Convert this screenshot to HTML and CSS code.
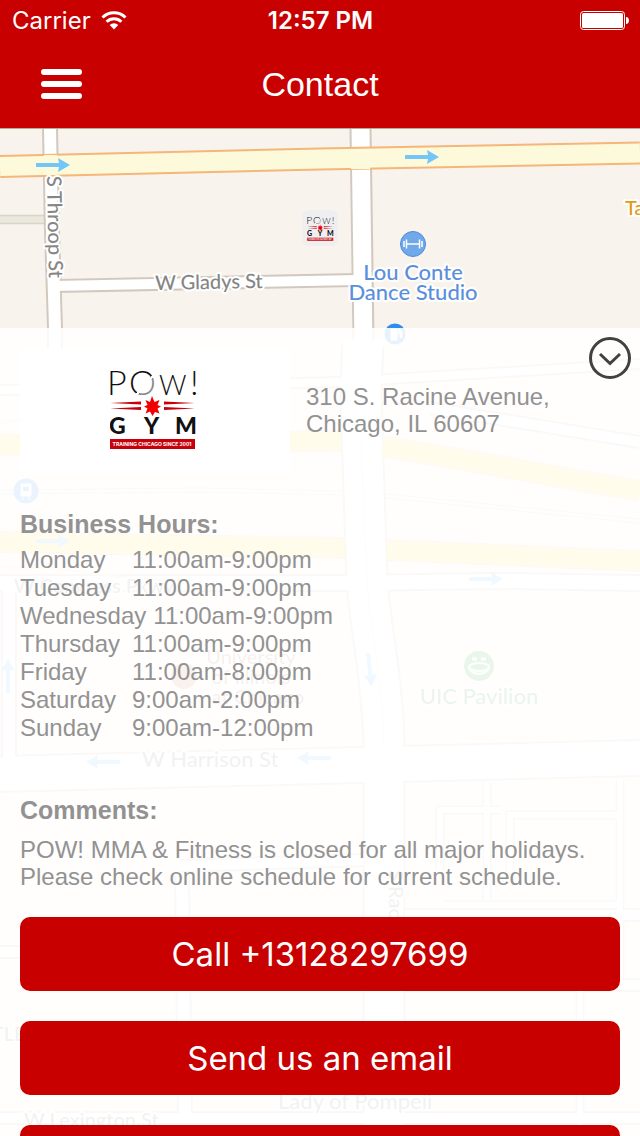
FILE: index.html
```html
<!DOCTYPE html>
<html lang="en">
<head>
    <meta charset="UTF-8">
    <meta name="viewport" content="width=device-width, initial-scale=1.0">
    <title>Contact</title>
    <link rel="stylesheet" href="styles.css">
</head>
<body>

    <header>
        <div class="status-bar">
            <div class="carrier">
                <span>Carrier</span>
                <svg class="wifi" viewBox="0 0 26 19" aria-hidden="true">
                    <path d="M1.5 6.5a16.5 16.5 0 0 1 23 0" fill="none" stroke="#fff" stroke-width="3"/>
                    <path d="M5.6 10.8a10.5 10.5 0 0 1 14.8 0" fill="none" stroke="#fff" stroke-width="3"/>
                    <path d="M13 18.5l-4.3-4.6a6.2 6.2 0 0 1 8.6 0z" fill="#fff"/>
                </svg>
            </div>
            <span class="time">12:57 PM</span>
            <svg class="battery" viewBox="0 0 49 19" aria-hidden="true">
                <rect x="0.5" y="0.5" width="44" height="18" rx="3" fill="none" stroke="#fff"/>
                <rect x="2" y="2" width="41" height="15" rx="1.5" fill="#fff"/>
                <path d="M46 6c4 0 4 7 0 7z" fill="#fff"/>
            </svg>
        </div>
        <nav>
            <button class="menu-button" type="button" aria-label="Menu">
                <span></span>
                <span></span>
                <span></span>
            </button>
            <h1>Contact</h1>
        </nav>
    </header>

    <main>
        <svg class="map" viewBox="0 129 640 1007" preserveAspectRatio="xMidYMin slice">
            <defs>
                <linearGradient id="ring" gradientUnits="userSpaceOnUse" x1="134" y1="374" x2="154" y2="392">
                    <stop offset="0.53" stop-color="#111"/>
                    <stop offset="0.54" stop-color="#fff"/>
                    <stop offset="0.61" stop-color="#fff"/>
                    <stop offset="0.62" stop-color="#888"/>
                </linearGradient>
                <symbol id="logo" viewBox="110 368 90 85">
                    <text class="logo-pow" y="395"><tspan x="107">P</tspan><tspan x="129" fill="url(#ring)">O</tspan><tspan class="narrow" x="159">W</tspan><tspan x="190">!</tspan></text>
                    <path d="M110 403l31-1.5v3zM110 408.500l31-1.5v3zM195 403l-31-1.5v3zM195 408.500l-31-1.5v3z" fill="#c8000a"/>
                    <path d="M152 396l2.5 6 5-2-2 5 3.500 1.500-3.500 2 2 5-4.500-1.500-2.500 4-2.500-4.500-4.500 2 2-5-3.500-2 3.500-1.500-2-5 4.500 2z" fill="#f00000"/>
                    <text class="logo-gym" y="434"><tspan x="109">G</tspan><tspan x="144">Y</tspan><tspan x="175">M</tspan></text>
                    <rect x="110" y="439" width="85" height="10" fill="#c8000a"/>
                    <text class="logo-tag" x="152" y="446">TRAINING CHICAGO SINCE 2001</text>
                </symbol>
                <symbol id="arrow" viewBox="0 0 34 14">
                    <path d="M0 5h23L22 0l12 7-12 7 1-5H0z" fill="#72c7f8"/>
                </symbol>
            </defs>

            <rect y="129" width="640" height="1007" fill="#f8f4ed"/>
            <path d="M0 215h46v9H0z" fill="#eae8dd"/>
            <path d="M0 215.5h46M0 223.5h46" stroke="#d8d4c6" stroke-width="1.5"/>

            <!-- streets: casing first, then surface -->
            <g fill="none" stroke="#d2c8be">
                <g stroke-width="16">
                    <path d="M50 128L52 230L55 328V440"/>
                    <path d="M56 286L356 280" stroke-width="14"/>
                    <path d="M9 590V760"/>
                    <path d="M182 872L185 1120"/>
                </g>
                <path d="M360.5 128L363.5 340" stroke-width="22"/>
                <path d="M363 346C362 365 361 380 361 400L367 580C369 620 383 680 384 745V1136" stroke-width="43"/>
                <path d="M0 583H340L500 581L640 583" stroke-width="18"/>
                <path d="M0 774L360 765L640 758" stroke-width="38"/>
                <path d="M0 390L340 382L640 364" stroke-width="12"/>
                <path d="M430 408L640 442" stroke-width="14"/>
                <path d="M0 952H180M180 866L364 860M405 915H640M405 985H640M0 1118H640" stroke-width="14"/>
                <path d="M487 782V900M620 780V980M580 985V1136M440 870V810H500M510 880V815H620M445 905H620" stroke-width="9"/>
            </g>
            <g fill="none" stroke="#fff">
                <g stroke-width="12">
                    <path d="M50 128L52 230L55 328V440"/>
                    <path d="M52 286L358 280" stroke-width="10"/>
                    <path d="M9 590V760"/>
                    <path d="M182 872L185 1120"/>
                </g>
                <path d="M360.5 128L363.5 346" stroke-width="18"/>
                <path d="M363 340C362 365 361 380 361 400L367 580C369 620 383 680 384 745V1136" stroke-width="39"/>
                <path d="M0 583H340L500 581L640 583" stroke-width="14"/>
                <path d="M0 774L360 765L640 758" stroke-width="34"/>
                <path d="M0 390L340 382L640 364" stroke-width="8"/>
                <path d="M430 408L640 442" stroke-width="10"/>
                <path d="M0 952H180M180 866L364 860M405 915H640M405 985H640M0 1118H640" stroke-width="10"/>
                <path d="M487 782V900M620 780V980M580 985V1136M440 870V810H500M510 880V815H620M445 905H620" stroke-width="6"/>
            </g>

            <!-- boulevard -->
            <path d="M0 166.5L320 159L640 153" fill="none" stroke="#f5b679" stroke-width="23"/>
            <path d="M0 166.5L320 159L640 153" fill="none" stroke="#fcfadb" stroke-width="19"/>
            <path d="M44 155h13v20H44zM351 149h19v20h-19z" fill="#fcfadb"/>

            <!-- expressway and rail line -->
            <g fill="none">
                <path d="M0 445L341 441M383 446L640 491M0 542L345 548M387 550L640 561" stroke="#f9c6a5" stroke-width="22"/>
                <path d="M0 445L341 441M383 446L640 491M0 542L345 548M387 550L640 561" stroke="#ffdf50" stroke-width="19"/>
                <path d="M0 423L110 407M0 567C100 568 100 580 180 580" stroke="#fbd9a8" stroke-width="2"/>
                <path d="M0 490L200 488L343 491M0 494L200 492L343 495M386 494L640 519M386 498L640 523" stroke="#c9c9c9"/>
                <path d="M361 440L367 580C369 620 383 680 384 745" stroke="#e6e2de"/>
            </g>

            <use href="#arrow" x="36" y="158" width="34" height="14"/>
            <use href="#arrow" x="405" y="150" width="34" height="14"/>
            <use href="#arrow" x="36" y="534" width="34" height="14"/>
            <use href="#arrow" x="469" y="572" width="34" height="14"/>
            <use href="#arrow" width="34" height="14" transform="translate(120 769) rotate(180)"/>
            <use href="#arrow" width="34" height="14" transform="translate(331 765) rotate(180)"/>
            <use href="#arrow" width="34" height="14" transform="translate(1 693) rotate(-90)"/>
            <use href="#arrow" width="34" height="14" transform="translate(375 652) rotate(84)"/>

            <g class="street">
                <text x="155" y="289" transform="rotate(-1 208 282)">W Gladys St</text>
                <text transform="translate(47 176) rotate(89)">S Throop St</text>
                <text x="14" y="593">W Congress Pkwy</text>
                <text class="major" x="142" y="767">W Harrison St</text>
                <text transform="translate(389 870) rotate(90)">S Racine Ave</text>
                <text x="24" y="1127">W Lexington St</text>
                <text class="major" x="278" y="1109">Lady of Pompeii</text>
                <text x="-36" y="1041">LITTLE</text>
            </g>

            <g class="place">
                <circle cx="413" cy="244" r="12.5" fill="#6fa9ea" stroke="#4f8ada"/>
                <path d="M407 244h12M406.5 239.5v9M419.5 239.5v9M404 241v6M422 241v6" stroke="#fff" stroke-width="1.5"/>
                <text x="413" y="280">Lou Conte</text>
                <text x="413" y="300">Dance Studio</text>
                <circle cx="395" cy="334" r="10.5" fill="#2f8cf0"/>
                <path d="M391 329h6v11h-6zM397 333l3 0v5l2-1v-6l-3-3" fill="#fff" stroke="#fff"/>
                <circle cx="26" cy="491" r="12.5" fill="#3f94f0"/>
                <path d="M21 484h10v12H21zM22 500l2-3M30 500l-2-3" fill="#fff" stroke="#fff"/>
                <path d="M23 487h6v4h-6z" fill="#3f94f0"/>
            </g>
            <text class="food" x="625" y="215">Tavern</text>

            <g class="campus">
                <circle cx="184" cy="676" r="13" fill="#d08c70"/>
                <text x="251" y="664">University</text>
                <text x="251" y="684">of Illinois</text>
                <text x="258" y="704">at Chicago</text>
            </g>
            <g class="arena">
                <circle cx="479" cy="666" r="15" fill="#48b048"/>
                <path d="M472 659h5M481 659h5" stroke="#fff" stroke-width="3"/>
                <ellipse cx="479" cy="667" rx="10" ry="4" fill="none" stroke="#fff" stroke-width="2"/>
                <path d="M469 667c1 9 19 9 20 0" fill="none" stroke="#fff" stroke-width="2"/>
                <text x="479" y="704">UIC Pavilion</text>
            </g>

            <rect x="302" y="210" width="36" height="36" rx="7" fill="#efeff1"/>
            <use href="#logo" x="307" y="216" width="28" height="26"/>
        </svg>

        <section class="sheet">
            <button class="collapse-button" type="button" aria-label="Hide details">
                <svg viewBox="0 0 42 42" fill="none" stroke="#414141">
                    <circle cx="21" cy="21" r="19.5" stroke-width="3"/>
                    <path d="M11 17l10 9.5L31 17" stroke-width="3"/>
                </svg>
            </button>

            <div class="gym">
                <div class="gym-logo">
                    <svg viewBox="0 0 90 85" role="img" aria-label="POW! Gym">
                        <use href="#logo" width="90" height="85"/>
                    </svg>
                </div>
                <address>310 S. Racine Avenue,<br>Chicago, IL 60607</address>
            </div>

            <h2>Business Hours:</h2>
            <table class="hours">
                <tbody>
                    <tr><th scope="row">Monday</th><td>11:00am-9:00pm</td></tr>
                    <tr><th scope="row">Tuesday</th><td>11:00am-9:00pm</td></tr>
                    <tr><th scope="row">Wednesday</th><td>11:00am-9:00pm</td></tr>
                    <tr><th scope="row">Thursday</th><td>11:00am-9:00pm</td></tr>
                    <tr><th scope="row">Friday</th><td>11:00am-8:00pm</td></tr>
                    <tr><th scope="row">Saturday</th><td>9:00am-2:00pm</td></tr>
                    <tr><th scope="row">Sunday</th><td>9:00am-12:00pm</td></tr>
                </tbody>
            </table>

            <h2 class="comments-title">Comments:</h2>
            <p class="comments">POW! MMA &amp; Fitness is closed for all major holidays. Please check online schedule for current schedule.</p>

            <div class="actions">
                <button type="button">Call +13128297699</button>
                <button type="button">Send us an email</button>
                <button type="button" aria-label="Directions"></button>
            </div>
        </section>
    </main>

</body>
</html>
```

FILE: styles.css
```css
* {
    box-sizing: border-box;
}
body {
    display: flex;
    flex-direction: column;
    height: 100vh;
    margin: 0;
    overflow: hidden;
    font-family: "Liberation Sans", Arial, sans-serif;
    font-size: 24px;
    color: #929292;
}
button {
    border: none;
    padding: 0;
    background: none;
    cursor: pointer;
}
header {
    background-color: #c80000;
    color: white;
}
.status-bar {
    display: grid;
    grid-template-columns: 1fr auto 1fr;
    align-items: center;
    height: 40px;
    padding: 0 11px 0 12px;
    font-family: Inter, sans-serif;
    font-size: 24px;
}
.carrier {
    display: flex;
    align-items: center;
    gap: 10px;
}
.wifi {
    width: 26px;
    height: 19px;
}
.time {
    font-weight: 600;
}
.battery {
    justify-self: end;
    width: 49px;
    height: 19px;
}
nav {
    display: grid;
    grid-template-columns: 1fr auto 1fr;
    align-items: center;
    height: 88px;
    padding: 0 41px;
}
nav h1 {
    margin: 0;
    font-size: 34px;
    font-weight: normal;
}
.menu-button {
    display: flex;
    flex-direction: column;
    gap: 6px;
    width: 41px;
}
.menu-button span {
    height: 6px;
    border-radius: 3px;
    background-color: white;
}
main {
    display: grid;
    grid-template-rows: minmax(0, 1fr);
    flex: 1;
    min-height: 0;
    border-top: 1px solid #b3ab9c;
}
.map, .sheet {
    grid-area: 1 / 1;
}
.map {
    width: 100%;
    height: 100%;
}
.map text {
    font-family: Lato, sans-serif;
    font-size: 20px;
    font-weight: 500;
    stroke: white;
    stroke-width: 4px;
    stroke-linejoin: round;
    paint-order: stroke;
}
.street {
    fill: #858585;
}
.map .major {
    font-size: 22px;
}
.place, .campus, .arena {
    text-anchor: middle;
}
.map .place text {
    font-size: 22px;
    fill: #5b8fdc;
}
.map .food {
    fill: #e39a14;
}
.campus text {
    fill: #c07a66;
}
.map .arena text {
    font-size: 22px;
    fill: #48a048;
}
symbol text.logo-pow {
    font-family: Lato, sans-serif;
    font-size: 34px;
    font-weight: 300;
    fill: #111;
    stroke: none;
}
.logo-pow .narrow {
    font-size: 27px;
}
symbol text.logo-gym {
    font-family: Lato, sans-serif;
    font-size: 23px;
    font-weight: 900;
    fill: #111;
    stroke: none;
}
symbol text.logo-tag {
    font-family: Inter, sans-serif;
    font-size: 5px;
    font-weight: bold;
    text-anchor: middle;
    fill: white;
    stroke: none;
}
.sheet {
    position: relative;
    margin-top: 199px;
    padding: 21px 20px;
    overflow-y: auto;
    scrollbar-width: none;
    background-color: rgba(255, 255, 255, 0.89);
}
.collapse-button {
    position: absolute;
    top: 9px;
    right: 9px;
    width: 42px;
    height: 42px;
}
.collapse-button svg {
    display: block;
}
.gym {
    display: flex;
    align-items: center;
    gap: 16px;
}
.gym-logo {
    display: flex;
    align-items: center;
    justify-content: center;
    width: 270px;
    height: 122px;
    background-color: white;
}
.gym-logo svg {
    width: 90px;
    height: 85px;
}
address {
    font-style: normal;
    line-height: 27px;
}
h2 {
    margin: 39px 0 8px;
    font-size: 25px;
    line-height: 28px;
}
.hours {
    display: block;
    line-height: 28px;
}
.hours tbody {
    display: block;
}
.hours tr {
    display: flex;
}
.hours th {
    min-width: 112px;
    padding: 0 7px 0 0;
    font-weight: normal;
    text-align: left;
}
.hours td {
    padding: 0;
}
.comments-title {
    margin: 54px 0 12px;
}
.comments {
    margin: 0;
    line-height: 27px;
}
.actions {
    display: flex;
    flex-direction: column;
    gap: 30px;
    margin-top: 27px;
}
.actions button {
    height: 74px;
    border-radius: 10px;
    background-color: #c80000;
    color: white;
    font-family: Inter, sans-serif;
    font-size: 33px;
}
```
